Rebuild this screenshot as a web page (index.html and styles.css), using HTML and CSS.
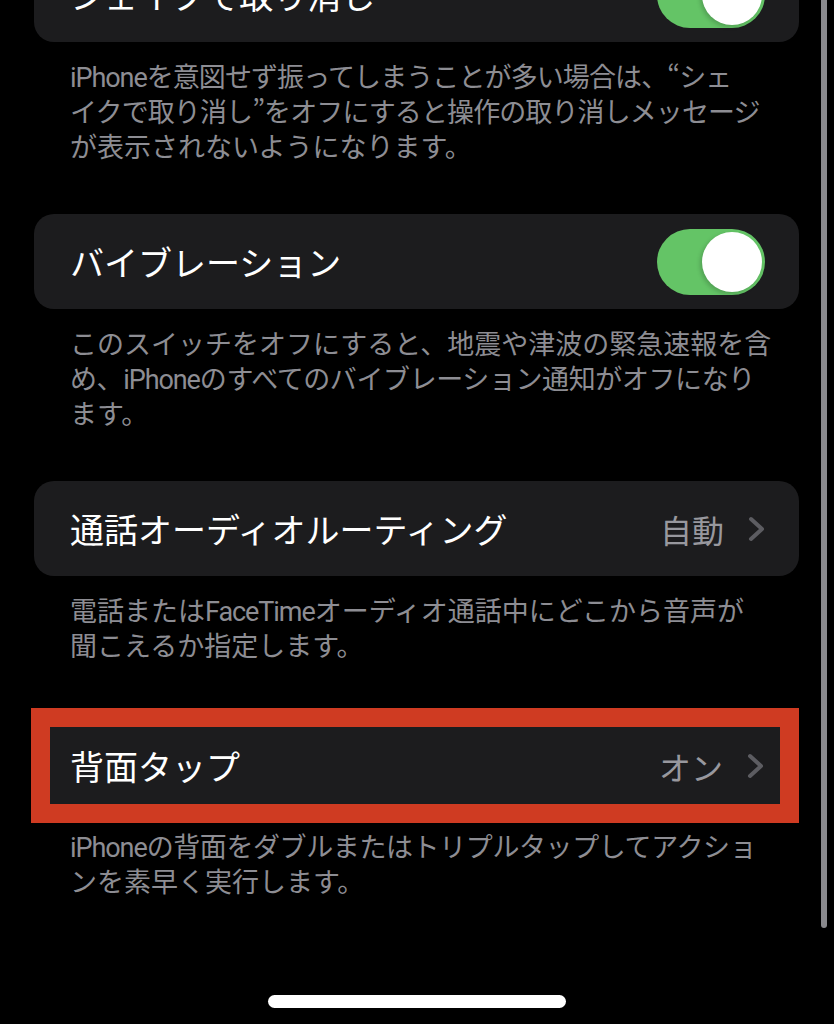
FILE: index.html
```html
<!DOCTYPE html>
<html lang="ja">
<head>
<meta charset="utf-8">
<title>設定</title>
<link rel="stylesheet" href="styles.css">
</head>
<body>
<div class="screen">
  <div class="list">
    <section class="section">
      <div class="card">
        <span class="title">シェイクで取り消し</span>
        <span class="toggle"><span class="knob"></span></span>
      </div>
      <p class="footer">
        <span class="line tight"><span class="en">iPhone</span>を意図せず振ってしまうことが多い場合は、“シェ</span>
        <span class="line tight">イクで取り消し”をオフにすると操作の取り消しメッセージ</span>
        <span class="line">が表示されないようになります。</span>
      </p>
    </section>

    <section class="section">
      <div class="card">
        <span class="title">バイブレーション</span>
        <span class="toggle"><span class="knob"></span></span>
      </div>
      <p class="footer">
        <span class="line">このスイッチをオフにすると、地震や津波の緊急速報を含</span>
        <span class="line snug">め、<span class="en">iPhone</span>のすべてのバイブレーション通知がオフになり</span>
        <span class="line">ます。</span>
      </p>
    </section>

    <section class="section">
      <div class="card">
        <span class="title">通話オーディオルーティング</span>
        <span class="detail">
          <span class="value">自動</span>
          <svg class="chev" width="17" height="26" viewBox="0 0 17 26"><polyline points="3,3 14,13 3,23" fill="none" stroke="#5c5c61" stroke-width="4" stroke-linecap="round" stroke-linejoin="round"/></svg>
        </span>
      </div>
      <p class="footer">
        <span class="line">電話または<span class="en">FaceTime</span>オーディオ通話中にどこから音声が</span>
        <span class="line">聞こえるか指定します。</span>
      </p>
    </section>

    <section class="section section-marked">
      <div class="card marked">
        <span class="title">背面タップ</span>
        <span class="detail">
          <span class="value">オン</span>
          <svg class="chev" width="17" height="26" viewBox="0 0 17 26"><polyline points="3,3 14,13 3,23" fill="none" stroke="#5c5c61" stroke-width="4" stroke-linecap="round" stroke-linejoin="round"/></svg>
        </span>
      </div>
      <p class="footer">
        <span class="line snug"><span class="en">iPhone</span>の背面をダブルまたはトリプルタップしてアクショ</span>
        <span class="line">ンを素早く実行します。</span>
      </p>
    </section>
  </div>

  <div class="scrollbar"></div>
  <div class="home-indicator"></div>
</div>
</body>
</html>
```

FILE: styles.css
```css
html, body {
  margin: 0;
  padding: 0;
  background: #000;
}

body {
  font-family: "Noto Sans CJK JP", "Noto Sans", sans-serif;
  color: #fff;
}

.screen {
  position: relative;
  width: 834px;
  height: 1024px;
  overflow: hidden;
  background: #000;
}

.list {
  display: flex;
  flex-direction: column;
  padding: 0 35px 0 34px;
  margin-top: -53px;
}

.section + .section {
  margin-top: 51px;
}

.card {
  box-sizing: border-box;
  height: 95px;
  background: #1c1c1e;
  border-radius: 20px;
  display: flex;
  align-items: center;
  justify-content: space-between;
  padding: 0 34px 0 36px;
}

.title {
  font-size: 34px;
  line-height: 1;
  color: #fff;
  white-space: nowrap;
}

.detail {
  display: flex;
  align-items: center;
  gap: 24px;
}

.value {
  font-size: 32px;
  line-height: 1;
  color: #98989e;
}

.chev {
  display: block;
}

.toggle {
  position: relative;
  box-sizing: border-box;
  width: 108px;
  height: 66px;
  border-radius: 33px;
  background: #64c466;
  display: flex;
  align-items: center;
  justify-content: flex-end;
  padding: 3px;
}

.knob {
  width: 60px;
  height: 60px;
  border-radius: 50%;
  background: #fff;
  box-shadow: -2px 2px 4px rgba(0, 0, 0, 0.18);
}

.footer {
  margin: 0;
  padding: 16px 36px 0;
  font-size: 27px;
  color: #8d8d93;
  white-space: nowrap;
  display: flex;
  flex-direction: column;
}

.line {
  display: block;
  height: 35px;
  line-height: 35px;
}

.line.tight {
  letter-spacing: -0.9px;
}

.line.snug {
  letter-spacing: -0.4px;
}

.en {
  font-family: "Roboto", "Noto Sans", sans-serif;
  letter-spacing: -0.04em;
  line-height: 1;
}

.section-marked {
  margin-top: 46px !important;
}

.card.marked {
  height: 115px;
  margin-left: -3px;
  border: 19px solid #cf3b22;
  border-radius: 0;
  background: #1c1c1e;
  padding: 0 16px 0 20px;
}

.marked + .footer {
  padding-top: 5px;
}

.scrollbar {
  position: absolute;
  top: 0;
  right: 7px;
  width: 6px;
  height: 928px;
  border-radius: 0 0 3px 3px;
  background: #8a8a8e;
}

.home-indicator {
  position: absolute;
  left: 50%;
  top: 995px;
  width: 298px;
  height: 13px;
  margin-left: -149px;
  border-radius: 7px;
  background: #fff;
}
```
